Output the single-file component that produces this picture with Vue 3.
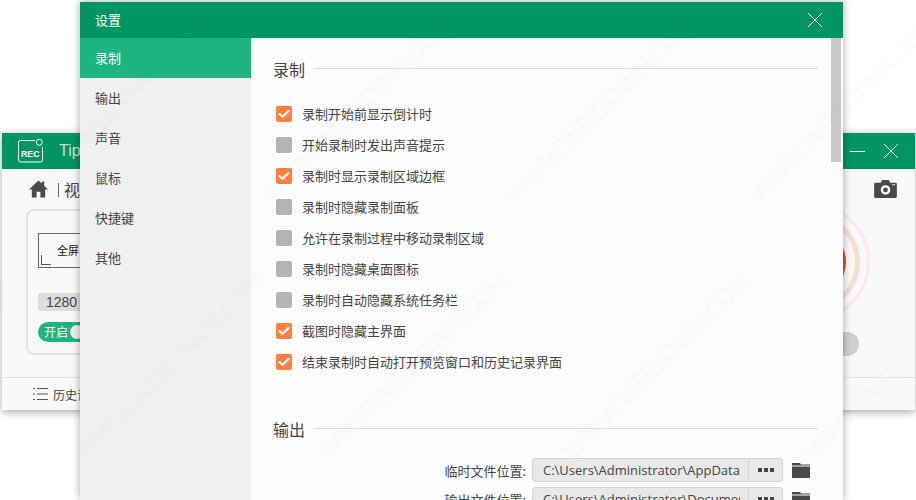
<script setup>
const menu = ['录制', '输出', '声音', '鼠标', '快捷键', '其他']
const options = [
  { label: '录制开始前显示倒计时', on: true },
  { label: '开始录制时发出声音提示', on: false },
  { label: '录制时显示录制区域边框', on: true },
  { label: '录制时隐藏录制面板', on: false },
  { label: '允许在录制过程中移动录制区域', on: false },
  { label: '录制时隐藏桌面图标', on: false },
  { label: '录制时自动隐藏系统任务栏', on: false },
  { label: '截图时隐藏主界面', on: true },
  { label: '结束录制时自动打开预览窗口和历史记录界面', on: true },
]
const paths = [
  { label: '临时文件位置:', value: 'C:\\Users\\Administrator\\AppData' },
  { label: '输出文件位置:', value: 'C:\\Users\\Administrator\\Documents' },
]
// watermark lattice, read off the reference: 243px across, 257px down with a 56px shift
const marks = []
for (let row = -1; row < 2; row++) {
  for (let col = -3; col < 4; col++) {
    marks.push({ left: 656 + col * 243 + row * 56 + 'px', top: 365 + row * 257 + 'px' })
  }
}
</script>

<template>
  <div class="desktop">
    <!-- main recorder window, behind -->
    <div class="win-main">
      <div class="main-bar">
        <svg class="rec-logo" width="26" height="26" viewBox="0 0 26 26" fill="none" stroke="#fff" stroke-width="1">
          <path d="M17 2.500H2.500a2 2 0 0 0-2 2V22a2 2 0 0 0 2 2H22.500a2 2 0 0 0 2-2V9" />
          <circle cx="21.300" cy="4.300" r="3" />
          <text x="3" y="19" font-size="8.800" font-weight="700" fill="#fff" stroke="none" font-family="Liberation Sans, sans-serif">REC</text>
        </svg>
        <span class="main-title">Tipard</span>
        <span class="spacer"></span>
        <svg class="win-btn" width="16" height="16" viewBox="0 0 16 16" stroke="#fff" stroke-width="1"><path d="M0 8.500h15" /></svg>
        <svg class="win-btn close" width="16" height="16" viewBox="0 0 16 16" stroke="#fff" stroke-width="1" fill="none"><path d="M1 1l14 14M15 1L1 15" /></svg>
      </div>
      <div class="main-tools">
        <svg width="19" height="18" viewBox="0 0 20 18" fill="#4a4a4a"><path d="M10 0L0 9.500h3V18h5v-6h4v6h5V9.500h3L16 5.700V1h-2.500v2.300z" /></svg>
        <i class="sep"></i>
        <span class="crumb">视频录制</span>
        <span class="spacer"></span>
        <svg class="camera" width="23" height="18" viewBox="0 0 24 19"><path fill="#4a4a4a" d="M1.500 3H7l1.500-3h7L17 3h5.500A1.500 1.500 0 0 1 24 4.500v13a1.500 1.500 0 0 1-1.500 1.500h-21A1.500 1.500 0 0 1 0 17.500v-13A1.500 1.500 0 0 1 1.500 3z" /><circle cx="12" cy="10.500" r="5" fill="#fff" /><circle cx="12" cy="10.500" r="2.500" fill="#4a4a4a" /><path d="M19 4.500h3v1h-3z" fill="#fff" /></svg>
      </div>
      <div class="main-body">
        <div class="main-card">
          <div class="area-box"><span>全屏</span><i class="corner"></i></div>
          <div class="size-pill">1280</div>
          <div class="toggle"><span>开启</span><i class="knob"></i></div>
        </div>
        <div class="rec-panel">
          <div class="rec-rings"><i class="ring ring-outer"></i><i class="ring ring-inner"></i><i class="rec-dot"></i></div>
          <div class="grey-pill"></div>
        </div>
      </div>
      <div class="main-foot">
        <svg width="15" height="14" viewBox="0 0 15 14" stroke="#555" stroke-width="1"><path d="M0 1.500h2M4 1.500h11M0 7h2M4 7h11M0 12.500h2M4 12.500h11" /></svg>
        <span>历史记录</span>
      </div>
    </div>

    <!-- settings dialog on top -->
    <div class="win-settings">
      <div class="set-bar">
        <span class="set-title">设置</span>
        <svg width="16" height="16" viewBox="0 0 16 16" stroke="#fff" stroke-width="1" fill="none"><path d="M1 1l14 14M15 1L1 15" /></svg>
      </div>
      <div class="set-body">
        <nav class="set-menu">
          <div v-for="(m, i) in menu" :key="m" class="menu-item" :class="{ active: i === 0 }">{{ m }}</div>
        </nav>
        <div class="set-content">
          <section class="group">
            <h3 class="group-title"><span>录制</span><i></i></h3>
            <div class="options">
              <label v-for="o in options" :key="o.label" class="option">
                <span class="check" :class="{ on: o.on }">
                  <svg v-if="o.on" width="12" height="10" viewBox="0 0 12 10" fill="none" stroke="#fff" stroke-width="2.200" stroke-linecap="round" stroke-linejoin="round"><path d="M1.500 5l3 2.800L10.500 2" /></svg>
                </span>
                {{ o.label }}
              </label>
            </div>
          </section>
          <section class="group output">
            <h3 class="group-title"><span>输出</span><i></i></h3>
            <div class="paths">
              <div v-for="p in paths" :key="p.label" class="path-row">
                <span class="path-label">{{ p.label }}</span>
                <div class="path-field">
                  <span class="path-value">{{ p.value }}</span>
                  <span class="path-more"><i></i><i></i><i></i></span>
                </div>
                <svg class="folder" width="18" height="15" viewBox="0 0 18 15" fill="#4a4a4a"><path d="M0 0h8l1 1.500h9v1H0zM0 3.500h18V15H0z" /></svg>
              </div>
            </div>
          </section>
          <div class="scrollbar"></div>
        </div>
      </div>
    </div>

    <!-- site watermark -->
    <div class="watermark" aria-hidden="true">
      <span v-for="(m, i) in marks" :key="i" :style="{ left: m.left, top: m.top }">WWW.WEIDOWN.COM</span>
    </div>
  </div>
</template>

<style scoped>
.desktop {
  position: relative;
  width: 916px;
  height: 500px;
  overflow: hidden;
  background: #fff;
  font-family: "Noto Sans CJK SC", "Liberation Sans", sans-serif;
  color: #444;
}

.spacer { flex: 1; }

/* back window */
.win-main {
  position: absolute;
  left: 2px;
  top: 133px;
  width: 913px;
  height: 277px;
  display: flex;
  flex-direction: column;
  background: #f9f9f9;
  box-shadow: 0 2px 8px rgba(0, 0, 0, 0.35);
}
.main-bar {
  height: 36px;
  flex: none;
  display: flex;
  align-items: center;
  padding: 0 16px;
  background: #009562;
  color: #fff;
}
.rec-logo { margin-right: 15px; }
.main-title { font-size: 16px; font-family: "Liberation Sans", sans-serif; opacity: 0.75; }
.win-btn { margin-left: 17px; }
.main-tools {
  height: 40px;
  flex: none;
  display: flex;
  align-items: center;
  padding: 0 18px 0 27px;
}
.sep { width: 1px; height: 14px; margin: 2px 5px 0 10px; background: #666; }
.crumb { font-size: 16px; }
.main-body {
  height: 146px;
  flex: none;
  display: flex;
  justify-content: space-between;
  padding: 0 45px 0 24px;
}
.main-card {
  width: 400px;
  box-sizing: border-box;
  border: 2px solid #e4e4e4;
  border-radius: 8px;
  padding: 22px 10px;
}
.area-box {
  position: relative;
  width: 200px;
  height: 35px;
  box-sizing: border-box;
  border: 1px solid #666;
  font-size: 11px;
  line-height: 33px;
  padding-left: 18px;
  color: #222;
}
.corner {
  position: absolute;
  left: 2px;
  bottom: 2px;
  width: 9px;
  height: 9px;
  border-left: 1px solid #555;
  border-bottom: 1px solid #555;
}
.size-pill {
  width: 100px;
  height: 18px;
  margin-top: 25px;
  padding-left: 8px;
  background: #ddd;
  border-radius: 3px;
  font-size: 14px;
  line-height: 18px;
  font-family: "Liberation Sans", sans-serif;
}
.toggle {
  position: relative;
  width: 62px;
  height: 20px;
  margin-top: 11px;
  background: #1cb57f;
  border-radius: 10px;
  color: #fff;
  font-size: 12px;
  line-height: 20px;
  padding-left: 6px;
  box-sizing: border-box;
}
.knob {
  position: absolute;
  left: 32px;
  top: 3px;
  width: 14px;
  height: 14px;
  border-radius: 50%;
  background: #eee;
}
.rec-panel {
  width: 120px;
  margin-top: -7px;
  display: flex;
  flex-direction: column;
  align-items: center;
  gap: 10px;
}
.rec-rings { position: relative; width: 120px; height: 120px; flex: none; }
.ring, .rec-dot { position: absolute; border-radius: 50%; box-sizing: border-box; }
.ring-outer { inset: 0; border: 3px solid #fbeae5; }
.ring-inner { inset: 10px; border: 5px solid #fadcd2; }
.rec-dot { inset: 24px; background: #e2502a; }
.grey-pill {
  width: 98px;
  height: 24px;
  flex: none;
  border-radius: 12px;
  background: #cfcfcf;
}
.main-foot {
  margin-top: 22px;
  flex: 1;
  display: flex;
  align-items: center;
  gap: 5px;
  padding-left: 31px;
  border-top: 1px solid #e4e4e4;
  font-size: 12px;
}

/* settings dialog */
.win-settings {
  position: absolute;
  left: 80px;
  top: 2px;
  width: 763px;
  height: 498px;
  display: flex;
  flex-direction: column;
  box-shadow: 0 0 8px rgba(0, 0, 0, 0.35);
}
.set-bar {
  height: 36px;
  flex: none;
  display: flex;
  align-items: center;
  justify-content: space-between;
  padding: 0 20px 0 15px;
  background: #009562;
  color: #fff;
  font-size: 13px;
}
.set-title { margin-top: -1px; }
.set-body { flex: 1; display: flex; min-height: 0; }
.set-menu { width: 171px; flex: none; background: #f0f0f0; }
.menu-item {
  height: 40px;
  padding-left: 15px;
  line-height: 40px;
  font-size: 13px;
  color: #444;
}
.menu-item.active { background: #1cb57f; color: #fff; }
.set-content {
  position: relative;
  flex: 1;
  background: #fcfcfc;
  padding: 19px 25px 0 22px;
  overflow: hidden;
}
.group-title {
  display: flex;
  align-items: flex-start;
  gap: 9px;
  margin: 0;
  font-size: 16px;
  font-weight: 400;
  line-height: 24px;
  color: #444;
}
.group-title i { flex: 1; height: 1px; margin-top: 11px; background: #ddd; }
.options { margin-top: 17px; margin-left: 3px; }
.option {
  display: flex;
  align-items: center;
  gap: 10px;
  height: 31px;
  font-size: 13px;
  color: #444;
}
.check {
  width: 16px;
  height: 16px;
  flex: none;
  display: flex;
  align-items: center;
  justify-content: center;
  border-radius: 2px;
  background: #b4b4b4;
}
.check.on { background: #ff7f3f; }
.output { margin-top: 40px; }
.paths { margin-top: 17px; display: flex; flex-direction: column; gap: 5px; }
.path-row { display: flex; align-items: center; }
.path-label { width: 253px; text-align: right; font-size: 13px; }
.path-field {
  width: 251px;
  height: 24px;
  margin-left: 6px;
  box-sizing: border-box;
  display: flex;
  background: #e8e8e8;
  border: 1px solid #d4d4d4;
  border-radius: 3px;
}
.path-value {
  flex: 1;
  min-width: 0;
  margin: 0 8px 0 10px;
  overflow: hidden;
  white-space: nowrap;
  font-size: 13px;
  line-height: 22px;
  font-family: "Open Sans", "Liberation Sans", sans-serif;
}
.path-more {
  width: 33px;
  flex: none;
  display: flex;
  align-items: center;
  justify-content: center;
  gap: 2px;
  border-left: 1px solid #d4d4d4;
}
.path-more i { width: 4px; height: 4px; background: #444; }
.folder { margin-left: 9px; }
.scrollbar {
  position: absolute;
  right: 2px;
  top: 0;
  width: 10px;
  height: 124px;
  background: #c8c8c8;
}

.watermark {
  position: absolute;
  inset: 0;
  pointer-events: none;
}
.watermark span {
  position: absolute;
  transform: translate(-50%, -50%) rotate(-45deg);
  font: 400 23px Lato, "Liberation Sans", sans-serif;
  white-space: nowrap;
  color: transparent;
  -webkit-text-stroke: 1px rgba(90, 90, 90, 0.045);
}
</style>
